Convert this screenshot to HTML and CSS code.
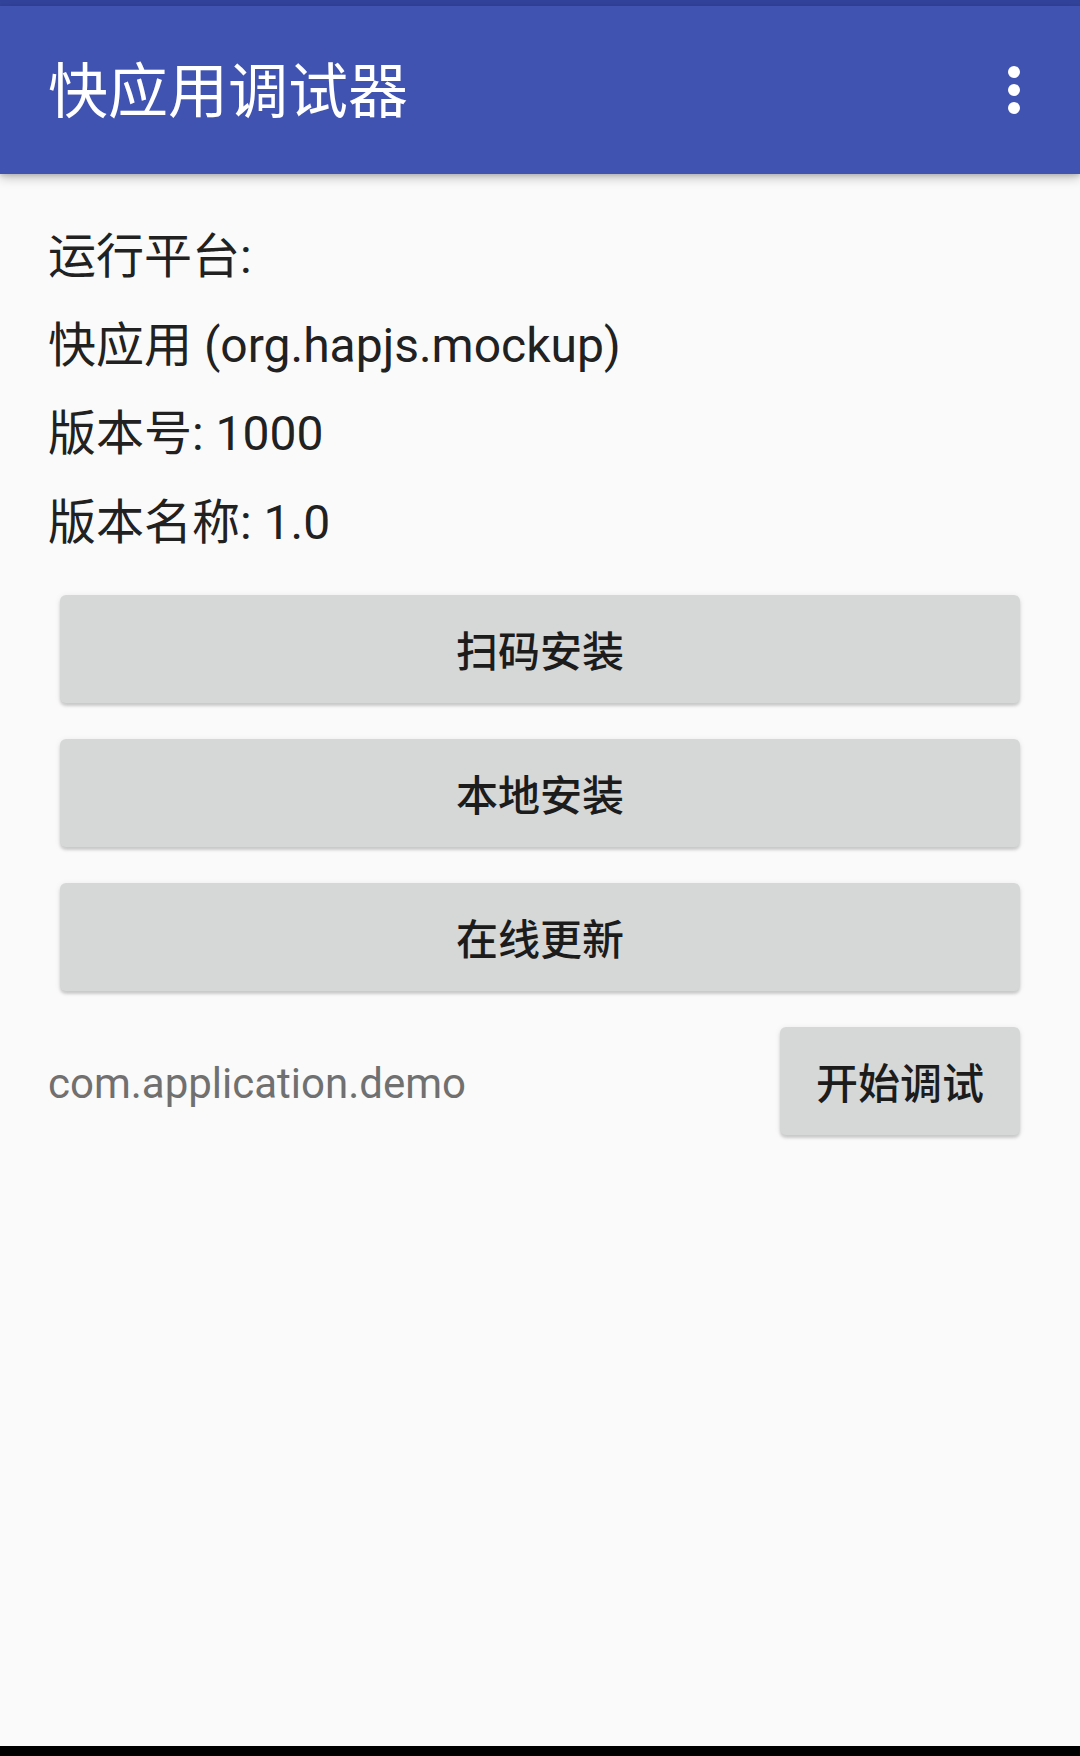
FILE: index.html
```html
<!DOCTYPE html>
<html lang="zh-CN">
<head>
<meta charset="utf-8">
<title>快应用调试器</title>
<link rel="stylesheet" href="styles.css">
</head>
<body>
<div class="screen">
  <div class="status-strip"></div>
  <header class="appbar">
    <h1 class="appbar-title">快应用调试器</h1>
    <button class="overflow" aria-label="更多">
      <svg width="12" height="48" viewBox="0 0 12 48" aria-hidden="true">
        <circle cx="6" cy="6" r="6" fill="#fff"/>
        <circle cx="6" cy="24" r="6" fill="#fff"/>
        <circle cx="6" cy="42" r="6" fill="#fff"/>
      </svg>
    </button>
  </header>
  <main class="content">
    <div class="info">
      <div class="info-line">运行平台:</div>
      <div class="info-line">快应用 (org.hapjs.mockup)</div>
      <div class="info-line">版本号: 1000</div>
      <div class="info-line">版本名称: 1.0</div>
    </div>
    <div class="actions">
      <button class="btn btn-wide">扫码安装</button>
      <button class="btn btn-wide">本地安装</button>
      <button class="btn btn-wide">在线更新</button>
    </div>
    <div class="debug-row">
      <div class="package-name">com.application.demo</div>
      <button class="btn btn-debug">开始调试</button>
    </div>
  </main>
  <div class="nav-strip"></div>
</div>
</body>
</html>
```
FILE: styles.css
```css
* {
  box-sizing: border-box;
}

html, body {
  margin: 0;
  padding: 0;
  background: #fafafa;
}

body {
  font-family: Roboto, "Noto Sans CJK SC", sans-serif;
  color: #212121;
}

.screen {
  width: 1080px;
  height: 1756px;
  display: flex;
  flex-direction: column;
  background: #fafafa;
  overflow: hidden;
}

.status-strip {
  height: 6px;
  background: #32439b;
  flex: none;
}

.appbar {
  height: 168px;
  flex: none;
  background: #4153b0;
  display: flex;
  align-items: center;
  justify-content: space-between;
  padding: 0 60px 0 48px;
  box-shadow: 0 4px 10px rgba(0, 0, 0, 0.22), 0 2px 4px rgba(0, 0, 0, 0.12);
  position: relative;
  z-index: 1;
}

.appbar-title {
  margin: 6px 0 0 0;
  font-size: 60px;
  font-weight: 400;
  color: #ffffff;
  line-height: 1;
  letter-spacing: 0;
}

.overflow {
  border: 0;
  background: none;
  padding: 0;
  width: 12px;
  height: 48px;
  display: flex;
  align-items: center;
  justify-content: center;
}

.content {
  flex: 1;
  padding: 39px 48px 0 48px;
  display: flex;
  flex-direction: column;
}

.info-line {
  font-size: 48px;
  line-height: 88.7px;
  height: 88.7px;
  color: #212121;
  white-space: nowrap;
}

.actions {
  margin-top: 27px;
  padding: 0 12px;
  display: flex;
  flex-direction: column;
  gap: 36px;
}

.btn {
  font-family: Roboto, "Noto Sans CJK SC", sans-serif;
  font-size: 42px;
  font-weight: 500;
  color: #1c1c1c;
  background: #d6d7d7;
  border: 0;
  border-radius: 6px;
  height: 108px;
  box-shadow: 0 3px 3px rgba(0, 0, 0, 0.16), 0 1px 6px rgba(0, 0, 0, 0.08);
  display: flex;
  align-items: center;
  justify-content: center;
  padding: 0;
}

.btn-wide {
  width: 100%;
}

.debug-row {
  margin-top: 36px;
  padding-right: 12px;
  display: flex;
  align-items: center;
  justify-content: space-between;
}

.package-name {
  font-size: 42px;
  color: #707070;
  line-height: 1;
  margin-top: 6px;
}

.btn-debug {
  width: 240px;
}

.nav-strip {
  height: 10px;
  background: #000;
  flex: none;
}
```
